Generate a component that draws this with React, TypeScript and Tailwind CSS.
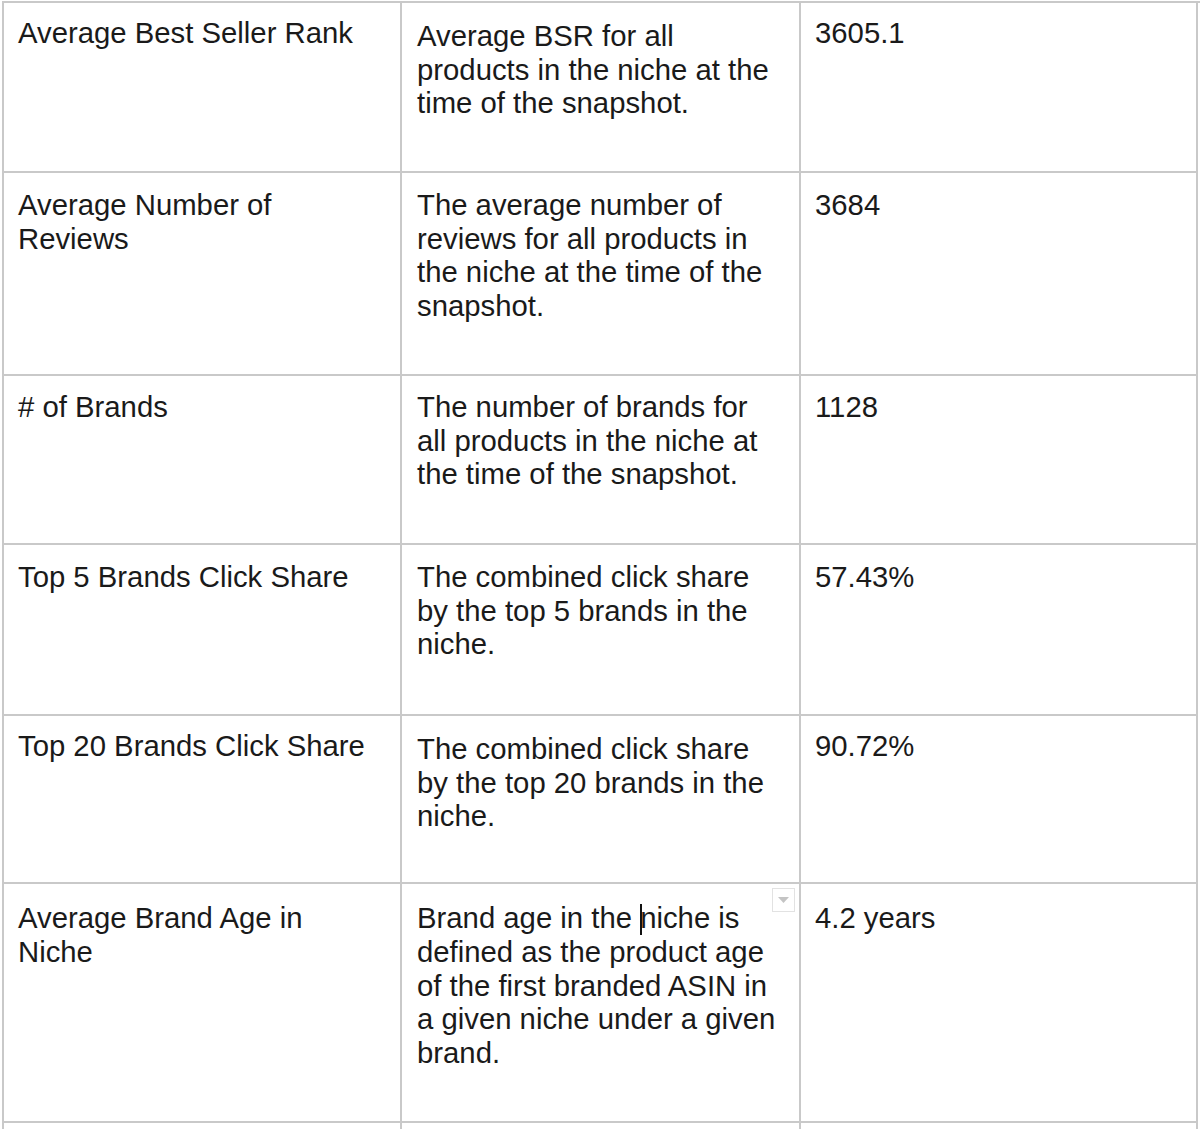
import React from 'react';

type Row = {
    h: string
    pad: [string, string, string]
    name: string[]
    desc: string[]
    value: string
}

const rows: Row[] = [
    {
        h: 'h-[170px]',
        pad: ['pt-[13px]', 'pt-[16px]', 'pt-[13px]'],
        name: ['Average Best Seller Rank'],
        desc: ['Average BSR for all', 'products in the niche at the', 'time of the snapshot.'],
        value: '3605.1',
    },
    {
        h: 'h-[203px]',
        pad: ['pt-[15px]', 'pt-[15px]', 'pt-[15px]'],
        name: ['Average Number of', 'Reviews'],
        desc: ['The average number of', 'reviews for all products in', 'the niche at the time of the', 'snapshot.'],
        value: '3684',
    },
    {
        h: 'h-[169px]',
        pad: ['pt-[14px]', 'pt-[14px]', 'pt-[14px]'],
        name: ['# of Brands'],
        desc: ['The number of brands for', 'all products in the niche at', 'the time of the snapshot.'],
        value: '1128',
    },
    {
        h: 'h-[171px]',
        pad: ['pt-[15px]', 'pt-[15px]', 'pt-[15px]'],
        name: ['Top 5 Brands Click Share'],
        desc: ['The combined click share', 'by the top 5 brands in the', 'niche.'],
        value: '57.43%',
    },
    {
        h: 'h-[168px]',
        pad: ['pt-[13px]', 'pt-[16px]', 'pt-[13px]'],
        name: ['Top 20 Brands Click Share'],
        desc: ['The combined click share', 'by the top 20 brands in the', 'niche.'],
        value: '90.72%',
    },
]

const cell = 'border-r-2 border-b-2 border-[#c9c9c9] px-[14px] whitespace-nowrap'

const Lines = ({ lines }: { lines: string[] }) => (
    <>
        {lines.map((l, i) => (
            <div key={i}>{l}</div>
        ))}
    </>
)

export default function App() {
    return (
        <div className="bg-white h-[1129px] overflow-hidden">
            <div
                className="ml-[2px] mt-[1px] grid grid-cols-[398px_399px_397px] border-t-2 border-l-2 border-[#c9c9c9] text-[29.3px] leading-[33.5px] text-[#1a1a1a]"
                style={{ fontFamily: '"Liberation Sans", Arial, sans-serif' }}
            >
                {rows.map((r) => (
                    <React.Fragment key={r.value}>
                        <div className={`${cell} ${r.h} ${r.pad[0]}`}>
                            <Lines lines={r.name} />
                        </div>
                        <div className={`${cell} ${r.h} ${r.pad[1]} pl-[15px]`}>
                            <Lines lines={r.desc} />
                        </div>
                        <div className={`${cell} ${r.h} ${r.pad[2]}`}>{r.value}</div>
                    </React.Fragment>
                ))}

                {/* last row: description cell has the cursor + dropdown hint */}
                <div className={`${cell} h-[239px] pt-[17px]`}>
                    <div>Average Brand Age in</div>
                    <div>Niche</div>
                </div>
                <div className={`${cell} relative h-[239px] pt-[17px] pl-[15px]`}>
                    <div>
                        Brand age in the{' '}
                        <span className="relative inline-block w-[2px] h-[31px] -mr-[2px] align-[-7px] bg-[#111]" />
                        niche is
                    </div>
                    <div>defined as the product age</div>
                    <div>of the first branded ASIN in</div>
                    <div>a given niche under a given</div>
                    <div>brand.</div>
                    <div className="absolute top-[4px] right-[4px] w-[23px] h-[24px] border border-[#e2e2e2] bg-white flex items-center justify-center">
                        <svg width="11" height="6" viewBox="0 0 11 6">
                            <path d="M0 0 H11 L5.5 6 Z" fill="#c4c4c4" />
                        </svg>
                    </div>
                </div>
                <div className={`${cell} h-[239px] pt-[17px]`}>4.2 years</div>

                <div className={`${cell} h-[40px]`} />
                <div className={`${cell} h-[40px]`} />
                <div className={`${cell} h-[40px]`} />
            </div>
        </div>
    )
}
